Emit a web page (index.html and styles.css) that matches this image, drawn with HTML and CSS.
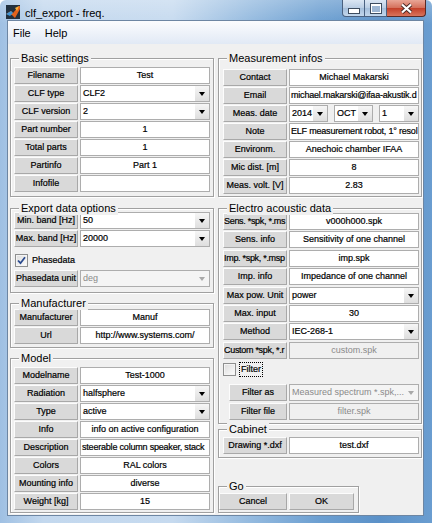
FILE: index.html
```html
<!DOCTYPE html>
<html>
<head>
  <link rel="stylesheet" href="styles.css">
</head>
<body>
  <div class="window">
    <div class="titlebar">
      <svg class="app-icon" width="14" height="14" viewBox="0 0 14 14">
        <rect width="14" height="14" fill="#22303e"/>
        <path d="M0 9 L5 6 L7 8 L13 1 L14 1 L14 4 L9 13 L6 10 Z" fill="#e3621c"/>
        <path d="M9 3 L13 1 L11 6 Z" fill="#f7b23b"/>
        <path d="M0 9 L5 6 L7 8 L4 11 Z" fill="#3f94d4"/>
      </svg>
      <span class="title-text">clf_export - freq.</span>
      <div class="caption">
        <div class="cap cap-min"></div>
        <div class="cap cap-max"></div>
        <div class="cap cap-close">
          <svg width="13" height="11" viewBox="0 0 13 11">
            <path d="M2 1.5 L11 9.5 M11 1.5 L2 9.5" stroke="#4a2a26" stroke-width="4"/>
            <path d="M2 1.5 L11 9.5 M11 1.5 L2 9.5" stroke="#fff" stroke-width="2.2"/>
          </svg>
        </div>
      </div>
    </div>

    <div class="frame">
      <div class="inner">
        <div class="menubar">
          <span class="menu-item">File</span>
          <span class="menu-item">Help</span>
        </div>

        <div class="client">
          <!-- left column -->
          <div class="col">
            <div class="panel basic">
              <span class="panel-title">Basic settings</span>
              <div class="row"><div class="lbl">Filename</div><div class="edit">Test</div></div>
              <div class="row"><div class="lbl">CLF type</div><div class="popup"><span>CLF2</span><i class="arrow"></i></div></div>
              <div class="row"><div class="lbl">CLF version</div><div class="popup"><span>2</span><i class="arrow"></i></div></div>
              <div class="row"><div class="lbl">Part number</div><div class="edit">1</div></div>
              <div class="row"><div class="lbl">Total parts</div><div class="edit">1</div></div>
              <div class="row"><div class="lbl">Partinfo</div><div class="edit">Part 1</div></div>
              <div class="row"><div class="lbl">Infofile</div><div class="edit"></div></div>
            </div>

            <div class="panel export">
              <span class="panel-title">Export data options</span>
              <div class="row"><div class="lbl">Min. band [Hz]</div><div class="popup"><span>50</span><i class="arrow"></i></div></div>
              <div class="row"><div class="lbl">Max. band [Hz]</div><div class="popup"><span>20000</span><i class="arrow"></i></div></div>
              <div class="check-row phase">
                <span class="checkbox checked">
                  <svg width="9" height="9" viewBox="0 0 9 9"><path d="M1 4.5 L3.5 7.2 L8 1.2" fill="none" stroke="#2a4a8e" stroke-width="1.8"/></svg>
                </span>
                <span class="check-text">Phasedata</span>
              </div>
              <div class="row"><div class="lbl">Phasedata unit</div><div class="popup disabled"><span>deg</span><i class="arrow"></i></div></div>
            </div>

            <div class="panel manuf">
              <span class="panel-title">Manufacturer</span>
              <div class="row"><div class="lbl">Manufacturer</div><div class="edit">Manuf</div></div>
              <div class="row"><div class="lbl">Url</div><div class="edit">http://www.systems.com/</div></div>
            </div>

            <div class="panel model">
              <span class="panel-title">Model</span>
              <div class="row"><div class="lbl">Modelname</div><div class="edit">Test-1000</div></div>
              <div class="row"><div class="lbl">Radiation</div><div class="popup"><span>halfsphere</span><i class="arrow"></i></div></div>
              <div class="row"><div class="lbl">Type</div><div class="popup"><span>active</span><i class="arrow"></i></div></div>
              <div class="row"><div class="lbl">Info</div><div class="edit">info on active configuration</div></div>
              <div class="row"><div class="lbl">Description</div><div class="edit left">steerable column speaker, stack</div></div>
              <div class="row"><div class="lbl">Colors</div><div class="edit">RAL colors</div></div>
              <div class="row"><div class="lbl">Mounting info</div><div class="edit">diverse</div></div>
              <div class="row"><div class="lbl">Weight [kg]</div><div class="edit">15</div></div>
            </div>
          </div>

          <!-- right column -->
          <div class="col">
            <div class="panel meas">
              <span class="panel-title">Measurement infos</span>
              <div class="row"><div class="lbl">Contact</div><div class="edit">Michael Makarski</div></div>
              <div class="row"><div class="lbl">Email</div><div class="edit left">michael.makarski@ifaa-akustik.d</div></div>
              <div class="row">
                <div class="lbl">Meas. date</div>
                <div class="date-group">
                  <div class="popup small"><span>2014</span><i class="arrow"></i></div>
                  <div class="popup small"><span>OCT</span><i class="arrow"></i></div>
                  <div class="popup small wide"><span>1</span><i class="arrow"></i></div>
                </div>
              </div>
              <div class="row"><div class="lbl">Note</div><div class="edit left">ELF measurement robot, 1° resol</div></div>
              <div class="row"><div class="lbl">Environm.</div><div class="edit">Anechoic chamber IFAA</div></div>
              <div class="row"><div class="lbl">Mic dist. [m]</div><div class="edit">8</div></div>
              <div class="row"><div class="lbl">Meas. volt. [V]</div><div class="edit">2.83</div></div>
            </div>

            <div class="panel electro">
              <span class="panel-title">Electro acoustic data</span>
              <div class="row"><div class="lbl left">Sens. *spk, *.ms</div><div class="edit">v000h000.spk</div></div>
              <div class="row"><div class="lbl">Sens. info</div><div class="edit">Sensitivity of one channel</div></div>
              <div class="row"><div class="lbl left">Imp. *spk, *.msp</div><div class="edit">imp.spk</div></div>
              <div class="row"><div class="lbl">Imp. info</div><div class="edit">Impedance of one channel</div></div>
              <div class="row"><div class="lbl">Max pow. Unit</div><div class="popup"><span>power</span><i class="arrow"></i></div></div>
              <div class="row"><div class="lbl">Max. input</div><div class="edit">30</div></div>
              <div class="row"><div class="lbl">Method</div><div class="popup"><span>IEC-268-1</span><i class="arrow"></i></div></div>
              <div class="row"><div class="lbl left">Custom *spk, *.r</div><div class="edit disabled">custom.spk</div></div>
              <div class="check-row filter">
                <span class="checkbox"></span>
                <span class="check-text focused">Filter</span>
              </div>
              <div class="row sub"><div class="lbl">Filter as</div><div class="popup disabled"><span>Measured spectrum *.spk,...</span><i class="arrow"></i></div></div>
              <div class="row sub"><div class="lbl">Filter file</div><div class="edit disabled">filter.spk</div></div>
            </div>

            <div class="panel cabinet">
              <span class="panel-title">Cabinet</span>
              <div class="row"><div class="lbl">Drawing *.dxf</div><div class="edit">test.dxf</div></div>
            </div>

            <div class="panel go">
              <span class="panel-title">Go</span>
              <div class="row">
                <div class="btn cancel">Cancel</div>
                <div class="btn ok">OK</div>
              </div>
            </div>
          </div>
        </div>
      </div>
    </div>
  </div>
</body>
</html>
```

FILE: styles.css
```css
* {
  box-sizing: border-box;
}

body {
  margin: 0;
  font-family: "Liberation Sans", Arial, sans-serif;
  background: #fff;
}

/* Window frame (Aero style) */
.window {
  width: 432px;
  height: 523px;
  display: flex;
  flex-direction: column;
  overflow: hidden;
  border-radius: 6px 6px 0 0;
  background:
    linear-gradient(180deg, rgba(255, 255, 255, 0.25), rgba(255, 255, 255, 0) 24px),
    linear-gradient(90deg, #9fc0e3 0%, #c3d8ee 10%, #c6daef 40%, #94badf 58%, #6c9fd1 74%, #5b91c8 88%, #6a9dd0 100%);
}

.titlebar {
  height: 20px;
  flex: none;
  display: flex;
  align-items: flex-start;
}

.app-icon {
  margin: 5px 0 0 6px;
  flex: none;
}

.title-text {
  margin: 7px 0 0 5px;
  font-size: 11px;
  line-height: 13px;
  color: #000;
}

.caption {
  margin-left: auto;
  margin-right: 6px;
  display: flex;
  height: 17px;
}

.cap {
  height: 17px;
  border: 1px solid #4a6180;
  border-top: none;
  display: flex;
  align-items: center;
  justify-content: center;
}

.cap-min {
  width: 23px;
  border-radius: 0 0 0 4px;
  background: linear-gradient(#dbe6f3, #b9cde4 50%, #a4bedb 51%, #c3d7ec);
}

.cap-min::before {
  content: "";
  width: 10px;
  height: 4px;
  margin-top: 6px;
  background: #fff;
  border: 1px solid #3d4c5f;
}

.cap-max {
  width: 22px;
  border-left: none;
  background: linear-gradient(#dbe6f3, #b9cde4 50%, #a4bedb 51%, #c3d7ec);
}

.cap-max::before {
  content: "";
  width: 10px;
  height: 9px;
  background: #9db6d3;
  border: 1px solid #3d4c5f;
  box-shadow: inset 0 0 0 1px #fff, inset 0 2px 0 #fff;
}

.cap-close {
  width: 39px;
  border-left: none;
  border-color: #5a2a25;
  border-radius: 0 0 4px 0;
  background: linear-gradient(#e9a696, #d46f5a 50%, #c33f28 51%, #d9745c);
}

.frame {
  flex: 1;
  display: flex;
  padding: 0 8px 7px 7px;
}

.inner {
  flex: 1;
  display: flex;
  flex-direction: column;
  border: 1px solid #6d86a3;
  background: #f0f0f0;
}

/* Menu bar */
.menubar {
  height: 23px;
  flex: none;
  display: flex;
  align-items: center;
  padding-left: 5px;
  background: linear-gradient(#fbfcfe, #e1e9f5);
  font-size: 11px;
  color: #000;
}

.menu-item {
  margin-right: 14px;
}

/* Client area */
.client {
  flex: 1;
  display: flex;
  gap: 4px;
  padding: 0 1px 0 2px;
}

.col {
  width: 204px;
  display: flex;
  flex-direction: column;
}

/* Panels (etched frame with title) */
.panel {
  position: relative;
  border: 1px solid #a0a0a0;
  box-shadow: inset 1px 1px 0 #fff, 1px 1px 0 #fff;
  padding-left: 3px;
}

.panel-title {
  position: absolute;
  top: -7px;
  left: 8px;
  padding: 0 2px;
  background: #f0f0f0;
  font-size: 11px;
  line-height: 13px;
  color: #000;
}

.basic {
  margin-top: 14px;
  padding-top: 8px;
  padding-bottom: 3px;
}

.export {
  margin-top: 11px;
  padding-top: 3px;
  padding-bottom: 4px;
}

.manuf {
  margin-top: 10px;
  padding-top: 5px;
  padding-bottom: 2px;
}

.model {
  margin-top: 10px;
  padding-top: 8px;
  padding-bottom: 1px;
}

.meas {
  margin-top: 14px;
  padding: 10px 0 1px 4px;
}

.electro {
  margin-top: 11px;
  padding: 4px 0 2px 4px;
}

.electro .row {
  margin-bottom: 1.4px;
}

.cabinet {
  margin-top: 5px;
  padding: 7px 0 2px 4px;
}

.go {
  margin-top: 28px;
  width: 141px;
  padding: 6px 0 1px 0;
}

/* Rows */
.row {
  display: flex;
  gap: 2px;
  height: 17px;
  margin-bottom: 1px;
  font-size: 9px;
  line-height: 15px;
  color: #000;
  -webkit-text-stroke: 0.2px #000;
}

.lbl,
.btn {
  width: 64px;
  flex: none;
  background: #d9d9d9;
  border: 1px solid;
  border-color: #fcfcfc #a8a8a8 #a8a8a8 #fcfcfc;
  text-align: center;
  white-space: nowrap;
  overflow: hidden;
}

.lbl.left {
  text-align: left;
  padding-left: 0;
  letter-spacing: -0.3px;
}

.edit {
  width: 130px;
  flex: none;
  background: #fff;
  border: 1px solid #adadad;
  text-align: center;
  white-space: nowrap;
  overflow: hidden;
  padding: 0 1px;
}

.edit.left {
  text-align: left;
  letter-spacing: -0.2px;
}

.edit.disabled {
  background: #f0f0f0;
  color: #8a8a8a;
  -webkit-text-stroke: 0;
}

.popup {
  width: 130px;
  flex: none;
  display: flex;
  background: #fff;
  border: 1px solid #adadad;
  white-space: nowrap;
  overflow: hidden;
}

.popup span {
  flex: 1;
  padding-left: 2px;
  overflow: hidden;
}

.arrow {
  width: 14px;
  flex: none;
  display: flex;
  align-items: center;
  justify-content: center;
  background: linear-gradient(#f6f6f6, #dedede);
}

.arrow::before {
  content: "";
  margin-top: 1px;
  border-left: 3.5px solid transparent;
  border-right: 3.5px solid transparent;
  border-top: 4px solid #000;
}

.popup.disabled {
  background: #f4f4f4;
  color: #8a8a8a;
  -webkit-text-stroke: 0;
}

.popup.disabled .arrow {
  background: #f4f4f4;
}

.popup.disabled .arrow::before {
  border-top-color: #a8a8a8;
}

.date-group {
  display: flex;
  gap: 6px;
}

.popup.small {
  width: 39px;
}

.popup.small.wide {
  width: 40px;
}

/* Checkboxes */
.check-row {
  display: flex;
  align-items: flex-start;
  font-size: 9px;
  line-height: 13px;
  color: #000;
  -webkit-text-stroke: 0.2px #000;
}

.phase {
  height: 22px;
  padding-top: 6px;
  padding-left: 1px;
}

.filter {
  height: 24px;
  padding-top: 3px;
}

.checkbox {
  width: 13px;
  height: 13px;
  flex: none;
  display: flex;
  align-items: center;
  justify-content: center;
  border: 1px solid #8e8f8f;
  background: linear-gradient(135deg, #dcdcdc, #fdfdfd);
  box-shadow: inset 0 0 0 1px #f4f4f4;
}

.check-text {
  margin-left: 4px;
}

.check-text.focused {
  outline: 1px dotted #000;
  padding: 0 1px;
}

.row.sub .lbl {
  width: 58px;
  margin-left: 6px;
}

/* Go buttons */
.btn.cancel {
  width: 68px;
}

.btn.ok {
  width: 65px;
}
```
